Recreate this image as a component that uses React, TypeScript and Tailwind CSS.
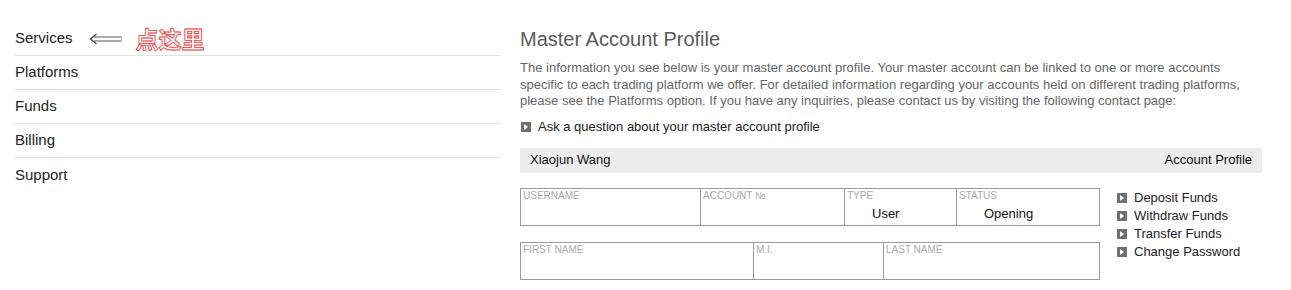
import React from "react";

function Bullet() {
  return (
    <span className="inline-flex w-[10px] h-[10px] bg-[#707070] items-center justify-center shrink-0">
      <svg width="4" height="6" viewBox="0 0 4 6">
        <path d="M0 0 L4 3 L0 6 Z" fill="#ffffff" />
      </svg>
    </span>
  );
}

function Arrow() {
  return (
    <svg width="34" height="12" viewBox="0 0 34 12" className="shrink-0">
      <path d="M7.5 1 L1.5 6 L7.5 11" fill="none" stroke="#444" strokeWidth="1.3" />
      <path d="M5 4 H32 M5 8 H32" fill="none" stroke="#555" strokeWidth="1.2" />
      <path d="M32.5 3 V9" stroke="#bbb" strokeWidth="1" />
    </svg>
  );
}

const navItems = ["Services", "Platforms", "Funds", "Billing", "Support"];

export default function App() {
  return (
    <div className="w-[1291px] h-[290px] bg-white flex font-['Liberation_Sans',Arial,sans-serif] overflow-hidden">
      {/* Left nav */}
      <div className="w-[500px] pl-[15px] pt-[22px] shrink-0">
        {navItems.map((item, i) => (
          <div
            key={item}
            className={`h-[34px] flex items-center text-[15px] text-[#222] ${
              i < navItems.length - 1 ? "border-b border-[#e2e2e2]" : ""
            }`}
          >
            <span>{item}</span>
            {i === 0 && (
              <>
                <span className="ml-[16px] flex items-center">
                  <Arrow />
                </span>
                <span className="ml-[13px] text-[23px] font-bold leading-none text-white [-webkit-text-stroke:0.8px_#f03030] font-['Noto_Sans_CJK_SC',sans-serif]">
                  点这里
                </span>
              </>
            )}
          </div>
        ))}
      </div>

      {/* Right content */}
      <div className="ml-[20px] w-[742px] pt-[27px]">
        <h1 className="text-[20px] leading-[24px] text-[#5a5a5a]">Master Account Profile</h1>
        <p className="mt-[9px] text-[13px] leading-[16.5px] text-[#666]">
          The information you see below is your master account profile. Your master account can be linked to one or more accounts
          <br />
          specific to each trading platform we offer. For detailed information regarding your accounts held on different trading platforms,
          <br />
          please see the Platforms option. If you have any inquiries, please contact us by visiting the following contact page:
        </p>
        <div className="mt-[9px] flex items-center gap-[7px] pl-[1px] text-[13px] leading-[16px] text-[#222]">
          <Bullet />
          <span>Ask a question about your master account profile</span>
        </div>
        <div className="mt-[13px] h-[25px] bg-[#ececec] flex items-center justify-between px-[10px] text-[13px] text-[#111]">
          <span>Xiaojun Wang</span>
          <span>Account Profile</span>
        </div>

        <div className="mt-[15px] flex">
          <div className="w-[580px] flex flex-col gap-[16px]">
            <div className="h-[38px] border border-[#9a9a9a] flex">
              <Cell label="USERNAME" w="w-[180px]" />
              <Cell label="ACCOUNT №" w="w-[144px]" />
              <Cell label="TYPE" w="w-[112px]" value="User" />
              <Cell label="STATUS" w="flex-1" value="Opening" last />
            </div>
            <div className="h-[38px] border border-[#9a9a9a] flex">
              <Cell label="FIRST NAME" w="w-[233px]" />
              <Cell label="M.I." w="w-[130px]" />
              <Cell label="LAST NAME" w="flex-1" last />
            </div>
          </div>
          <div className="ml-[17px] pt-[1px] flex flex-col text-[13px] leading-[18px] text-[#222]">
            {["Deposit Funds", "Withdraw Funds", "Transfer Funds", "Change Password"].map((t) => (
              <div key={t} className="flex items-center gap-[7px]">
                <Bullet />
                <span>{t}</span>
              </div>
            ))}
          </div>
        </div>
      </div>
    </div>
  );
}

function Cell({ label, w, value, last }: { label: string; w: string; value?: string; last?: boolean }) {
  return (
    <div className={`${w} h-full ${last ? "" : "border-r border-[#9a9a9a]"} pl-[2px] pt-[1px]`}>
      <div className="text-[10px] leading-[12px] text-[#aaa]">{label}</div>
      {value && <div className="mt-[4px] pl-[25px] text-[13px] leading-[16px] text-[#111]">{value}</div>}
    </div>
  );
}
